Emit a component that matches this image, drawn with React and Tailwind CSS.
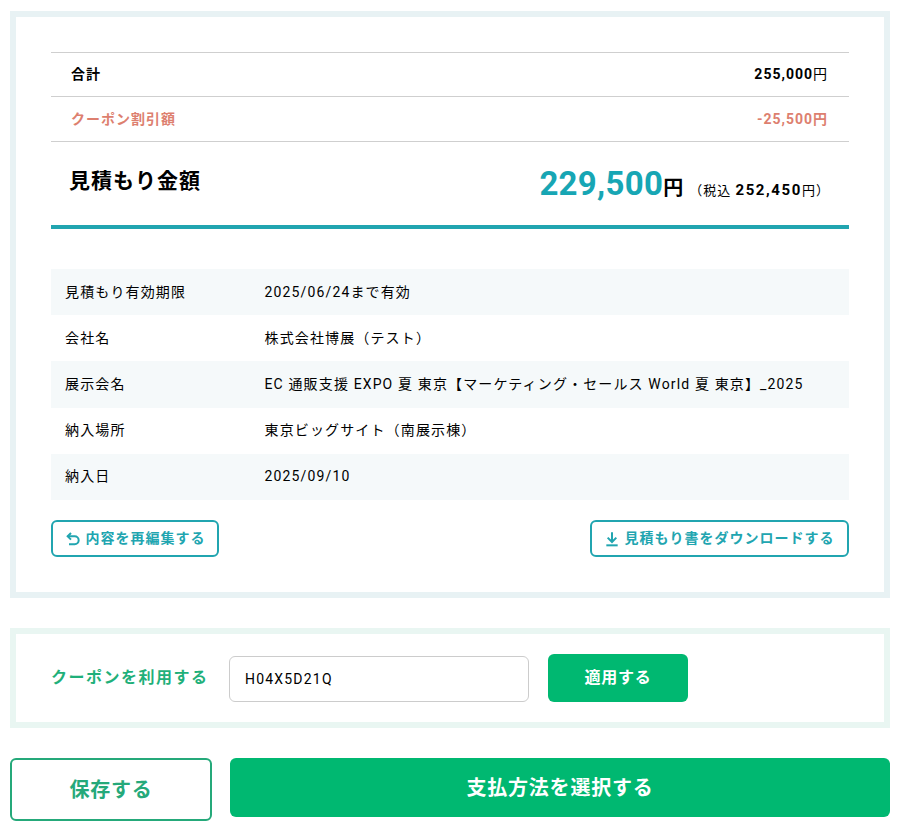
const details = [
  { label: "見積もり有効期限", value: "2025/06/24まで有効" },
  { label: "会社名", value: "株式会社博展（テスト）" },
  { label: "展示会名", value: "EC 通販支援 EXPO 夏 東京【マーケティング・セールス World 夏 東京】_2025" },
  { label: "納入場所", value: "東京ビッグサイト（南展示棟）" },
  { label: "納入日", value: "2025/09/10" },
];

function ReturnIcon() {
  return (
    <svg width="16" height="16" viewBox="0 0 24 24" fill="none" stroke="currentColor" strokeWidth="3" className="shrink-0 mt-[2px]">
      <path d="M9 3 L4 8 L9 13" />
      <path d="M4 8 H14.5 A6 6 0 0 1 14.5 20 H6" />
    </svg>
  );
}

function DownloadIcon() {
  return (
    <svg width="16" height="16" viewBox="0 0 24 24" fill="none" stroke="currentColor" strokeWidth="3" className="shrink-0 mt-[2px] -ml-[1px]">
      <path d="M12 2 V16" />
      <path d="M5.5 10 L12 16.5 L18.5 10" />
      <path d="M3.5 21.5 H20.5" />
    </svg>
  );
}

export default function App() {
  return (
    <main className="min-h-[838px] bg-white pl-[10px] pr-[11px] pt-[11px] text-black font-['Roboto','Noto_Sans_CJK_JP',sans-serif] tracking-[1px]">
      {/* Estimate */}
      <section className="h-[587px] border-[6px] border-[#e8f2f4] px-[35px] pt-[35px]">
        <div className="flex h-[45px] items-center justify-between border-y border-[#cfcfcf] pl-5 pr-[21px] text-[14px] font-bold">
          <span>合計</span>
          <span>
            255,000<span className="font-normal">円</span>
          </span>
        </div>
        <div className="flex h-[45px] items-center justify-between border-b border-[#cfcfcf] pl-5 pr-[21px] text-[14px] font-bold text-[#dd7f6f]">
          <span>クーポン割引額</span>
          <span>-25,500円</span>
        </div>
        <div className="flex h-[87px] items-center justify-between border-b-4 border-[#21a5b0] pl-[18px] pr-[19px]">
          <span className="mb-1 text-[21px] font-bold tracking-[1px]">見積もり金額</span>
          <div className="flex items-baseline">
            <span className="text-[33px] font-bold text-[#17a6b4] tracking-[0.3px]">229,500</span>
            <span className="text-[20px] font-bold">円</span>
            <span className="ml-[5px] text-[13px]">
              （税込 <span className="text-[15px] font-bold tracking-[1.6px]">252,450</span>円）
            </span>
          </div>
        </div>

        <dl className="mt-10 text-[14px] tracking-[1.14px]">
          {details.map((row, i) => (
            <div key={row.label} className={`flex h-[46.2px] items-center px-[14px] ${i % 2 === 0 ? "bg-[#f5f9fa]" : ""}`}>
              <dt className="w-[199.5px] shrink-0">{row.label}</dt>
              <dd>{row.value}</dd>
            </div>
          ))}
        </dl>

        <div className="mt-5 flex justify-between">
          <button className="flex h-[37px] w-[168px] items-center justify-center gap-[5px] rounded-md border-2 border-[#21a5b0] text-[14px] font-bold text-[#21a5b0]">
            <ReturnIcon />
            内容を再編集する
          </button>
          <button className="flex h-[37px] w-[259px] items-center justify-center gap-[5px] rounded-md border-2 border-[#21a5b0] text-[14px] font-bold text-[#21a5b0]">
            <DownloadIcon />
            見積もり書をダウンロードする
          </button>
        </div>
      </section>

      {/* Coupon */}
      <section className="mt-[30px] flex h-[100px] items-center border-[6px] border-[#e9f6f2] pl-[35px]">
        <span className="w-[178px] shrink-0 text-[16px] font-bold tracking-[1.5px] text-[#1fb07a]">クーポンを利用する</span>
        <input
          readOnly
          value="H04X5D21Q"
          className="mt-[2px] h-[46px] w-[300px] rounded-md border border-[#cccccc] px-[15px] text-[14px] tracking-[1.2px] outline-none"
        />
        <button className="ml-[19px] h-[48px] w-[140px] rounded-md bg-[#00b871] text-[16px] font-bold tracking-[0.8px] text-white">
          適用する
        </button>
      </section>

      {/* Actions */}
      <div className="mt-[30px] flex items-start gap-[18px]">
        <button className="h-[63px] w-[202px] rounded-md border-2 border-[#25a97a] text-[20px] font-bold tracking-[0.8px] text-[#25a97a]">
          保存する
        </button>
        <button className="h-[59px] flex-1 rounded-md bg-[#00b871] text-[20px] font-bold tracking-[0.8px] text-white">
          支払方法を選択する
        </button>
      </div>
    </main>
  );
}
